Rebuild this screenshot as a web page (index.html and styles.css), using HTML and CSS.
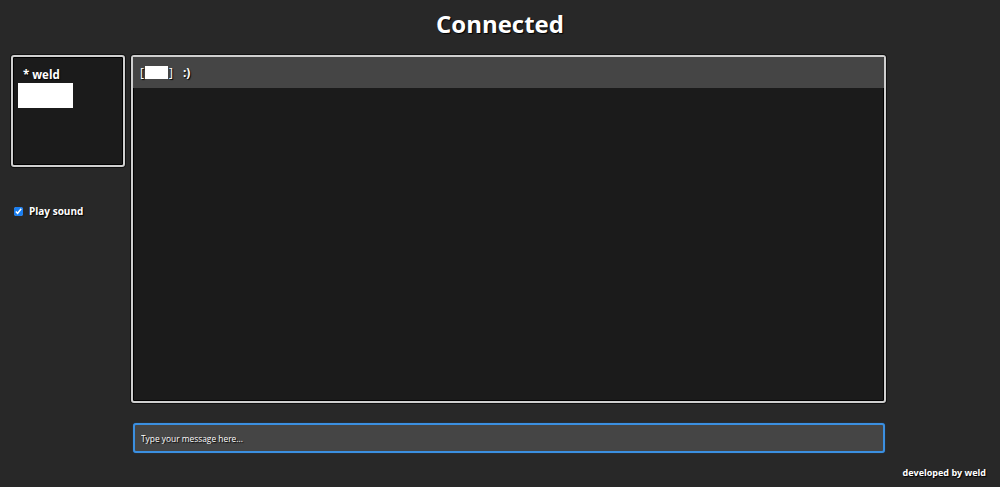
FILE: index.html
```html
<!DOCTYPE html>
<html>
<head>
<meta charset="utf-8">
<link rel="stylesheet" href="styles.css">
</head>
<body>
<h1 class="title">Connected</h1>
<div class="layout">
  <aside class="sidebar">
    <div class="panel users">
      <div class="user">* weld</div>
      <div class="user-box"></div>
    </div>
    <label class="sound"><input type="checkbox" checked class="check"><span>Play sound</span></label>
  </aside>
  <main class="main">
    <div class="panel chat">
      <div class="chat-head"><span class="bracket">[<span class="name-box"></span>]</span><span class="smile">:)</span></div>
      <div class="chat-body"></div>
    </div>
    <input class="msg" type="text" placeholder="Type your message here..." autofocus>
  </main>
</div>
<div class="footer">developed by weld</div>
</body>
</html>
```
FILE: styles.css
```css
html, body { margin: 0; padding: 0; }
body {
  background: #282828;
  color: #fff;
  font-family: "Open Sans", "DejaVu Sans", sans-serif;
  height: 487px;
  overflow: hidden;
}
.title {
  margin: 0;
  padding-top: 7px;
  height: 55px;
  box-sizing: border-box;
  text-align: center;
  font-size: 24px;
  font-weight: 700;
  line-height: 34px;
  text-shadow: 1px 1px 1px #000;
}
.layout {
  display: flex;
  padding-left: 11px;
  gap: 6px;
}
.sidebar { width: 114px; }
.panel {
  box-sizing: border-box;
  border: 2px solid #cfcfcf;
  border-radius: 3px;
  background: #1b1b1b;
  box-shadow: inset 0 0 0 1px #000, 0 0 0 1px #111;
}
.users {
  height: 112px;
  padding: 10px 5px;
}
.user {
  font-size: 11.5px;
  font-weight: 700;
  line-height: 16px;
  padding-left: 5px;
  text-shadow: 1px 1px 1px #000;
}
.user-box {
  width: 55px;
  height: 25px;
  background: #fff;
}
.sound {
  display: flex;
  align-items: center;
  margin-top: 37px;
  padding-left: 3px;
  font-size: 10px;
  font-weight: 700;
  text-shadow: 1px 1px 1px #000;
}
.check {
  width: 9px;
  height: 9px;
  margin: 0 6px 0 0;
  accent-color: #1a7ef0;
}
.main {
  width: 755px;
  display: flex;
  flex-direction: column;
}
.chat {
  height: 348px;
  display: flex;
  flex-direction: column;
  overflow: hidden;
}
.chat-head {
  height: 31px;
  background: #454545;
  display: flex;
  align-items: center;
  padding-left: 7px;
  font-size: 12px;
  font-weight: 700;
  text-shadow: 1px 1px 1px #000;
}
.bracket {
  display: flex;
  align-items: center;
  font-weight: 400;
}
.name-box {
  display: inline-block;
  width: 23px;
  height: 13px;
  background: #fff;
  margin: 0 1px;
}
.smile { margin-left: 10px; }
.chat-body { flex: 1; }
.msg {
  margin: 20px 1px 0 2px;
  height: 30px;
  box-sizing: border-box;
  background: #454545;
  border: 2px solid #3b8fe0;
  border-radius: 3px;
  padding: 0 6px;
  color: #fff;
  font-family: "Open Sans", "DejaVu Sans", sans-serif;
  font-size: 8.4px;
  outline: none;
  box-shadow: 0 0 1px #1b5fa8;
}
.msg::placeholder {
  color: #fff;
  opacity: 1;
  text-shadow: 1px 1px 1px #000;
}
.footer {
  text-align: right;
  padding-right: 14px;
  margin-top: 13px;
  font-size: 9px;
  font-weight: 700;
  text-shadow: 1px 1px 1px #000;
}
```
